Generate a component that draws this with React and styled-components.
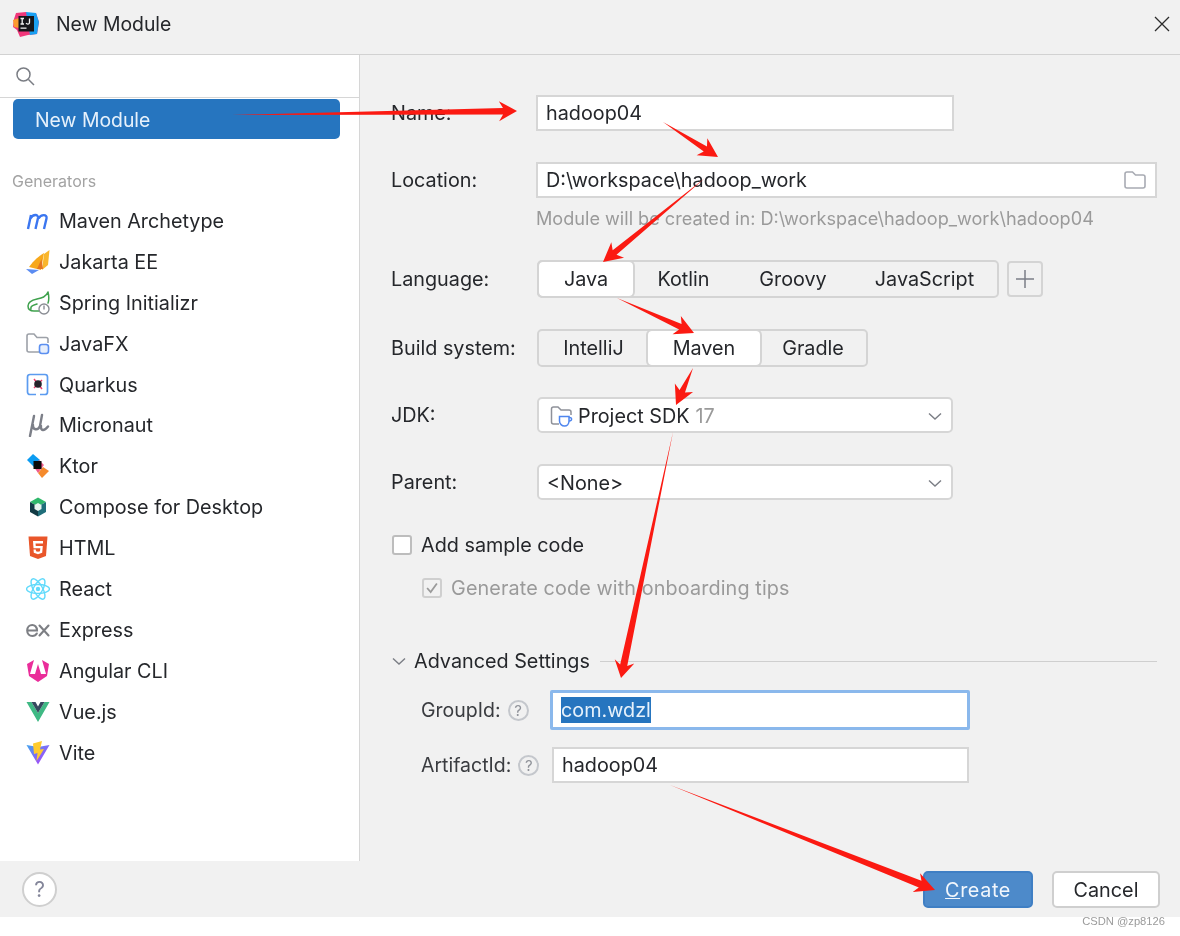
import React from 'react'
import styled, {createGlobalStyle} from 'styled-components'

const GlobalStyle = createGlobalStyle`
    html, body {
        margin: 0;
        padding: 0;
        background: #ffffff;
    }
    * {
        box-sizing: border-box;
    }
`

const MavenIcon = () => (
    <svg width="24" height="24" viewBox="0 0 24 24" fill="none" stroke="#3b76f0" strokeWidth="2.4">
        <path d="M2 20 L5 6 M4.5 9.5 C7 5 12.5 5 12 9 L9.5 20 M12.5 9.5 C15 5 21.5 5 20.5 9.5 L18 20"/>
    </svg>
)
const JakartaIcon = () => (
    <svg width="24" height="24" viewBox="0 0 24 24">
        <path d="M3 17 C8 10 13 6 18 3 L15 20 Z" fill="#f7a81b"/>
        <path d="M16 20 L18 4 L23.5 0 L22 15 Z" fill="#f9b62c"/>
        <path d="M11 19 L15.5 9 L17 19 Z" fill="#e5751f"/>
        <path d="M0 19 L13 20 L6 24 Z" fill="#5b8cf2"/>
    </svg>
)
const SpringIcon = () => (
    <svg width="24" height="24" viewBox="0 0 24 24" fill="none">
        <path d="M22 1 C20 6 16 7 11 8 C6 9 2 11 2 15 C2 19 5 20 8 20 H13 M5 18 C4 15 8 14 11 13 M22 1 C23 5 23 9 22 12" stroke="#3fa14d" strokeWidth="1.5" strokeLinecap="round"/>
        <circle cx="18" cy="18" r="5" fill="#fff" stroke="#8a8d94" strokeWidth="1.4"/>
        <path d="M18 14.5 V18.5" stroke="#8a8d94" strokeWidth="1.4"/>
    </svg>
)
const JavaFxIcon = () => (
    <svg width="24" height="24" viewBox="0 0 24 24" fill="none">
        <path d="M13 20 H3 C2 20 1 19 1 18 V4 C1 3 2 2 3 2 H8 L11 5.5 H20 C21 5.5 22 6.5 22 7.5 V11" stroke="#9da1a8" strokeWidth="1.6"/>
        <rect x="13.5" y="12.5" width="9" height="9" rx="2.4" fill="#e6eefc" stroke="#5b8ff0" strokeWidth="1.6"/>
    </svg>
)
const QuarkusIcon = () => (
    <svg width="24" height="24" viewBox="0 0 24 24" fill="none">
        <path d="M10 21.5 H4 C2.5 21.5 1.5 20.5 1.5 19 V4 C1.5 2.5 2.5 1.5 4 1.5 H19 C20.5 1.5 21.5 2.5 21.5 4 V19 C21.5 20.5 20.5 21.5 19 21.5 H14" stroke="#5b9bf0" strokeWidth="1.7"/>
        <path d="M8 6 L16 16 M16 7 L8 15" stroke="#ec3f6e" strokeWidth="1.5"/>
        <circle cx="12" cy="11" r="3.8" fill="#24242a"/>
    </svg>
)
const MicronautIcon = () => (
    <svg width="24" height="24" viewBox="0 0 24 24" fill="none" stroke="#7c7f88" strokeWidth="2.4" strokeLinecap="round">
        <path d="M8 3 L4 23 M7 12 C6.5 17 12 18 14 13 L16 2 M15 13 C14.5 18 18 18.5 22 13.5"/>
    </svg>
)
const KtorIcon = () => (
    <svg width="24" height="24" viewBox="0 0 24 24">
        <path d="M1 6 L7 0 L14 6 L8 13 Z" fill="#0c9cf2"/>
        <path d="M12 19 L17 13 L23 17 L16 24 Z" fill="#f58a2c"/>
        <path d="M8 13 L13 6 L18 11 L12 19 Z" fill="#ef5a8c"/>
        <rect x="7.5" y="7" width="8" height="8" fill="#0a0a0a"/>
    </svg>
)
const ComposeIcon = () => (
    <svg width="24" height="24" viewBox="0 0 24 24">
        <path d="M12 2.5 L20 7 L12 11.5 L4 7 Z" fill="#2fb86b"/>
        <path d="M4 7 L12 11.5 V21.5 L4 17 Z" fill="#123a44"/>
        <path d="M20 7 L12 11.5 V21.5 L20 17 Z" fill="#1f6e7a"/>
        <path d="M12 8 L15.5 10 V14 L12 16 L8.5 14 V10 Z" fill="#e8f4ee"/>
    </svg>
)
const HtmlIcon = () => (
    <svg width="24" height="24" viewBox="0 0 24 24">
        <path d="M2.5 0.5 H21.5 L20 20 L12 23 L4 20 Z" fill="#e9562a"/>
        <path d="M7 5 H17 V7.4 H9.5 L9.8 10 H16.8 L16.2 16.8 L12 18.2 L7.8 16.8 L7.5 13.6 H9.8 L10 15.2 L12 15.8 L14 15.2 L14.3 12.3 H7.5 Z" fill="#fff"/>
    </svg>
)
const ReactIcon = () => (
    <svg width="24" height="24" viewBox="0 0 24 24" fill="none" stroke="#61dafb" strokeWidth="1.4">
        <ellipse cx="12" cy="12" rx="11.5" ry="4.5"/>
        <ellipse cx="12" cy="12" rx="11.5" ry="4.5" transform="rotate(60 12 12)"/>
        <ellipse cx="12" cy="12" rx="11.5" ry="4.5" transform="rotate(120 12 12)"/>
        <circle cx="12" cy="12" r="2.2" fill="#61dafb" stroke="none"/>
    </svg>
)
const ExpressIcon = () => (
    <svg width="24" height="24" viewBox="0 0 24 24" fill="none" stroke="#7d7f84" strokeWidth="2.1" strokeLinecap="round">
        <path d="M1.5 12.5 H11 C11 8.5 8.5 7 6.3 7 C3.5 7 1.2 9 1.2 12.5 C1.2 16 3.5 18 6.3 18 C8.4 18 10 17 10.8 15.5"/>
        <path d="M13.5 7.5 L22.5 17.5 M22.5 7.5 L13.5 17.5"/>
    </svg>
)
const AngularIcon = () => (
    <svg width="24" height="24" viewBox="0 0 24 24">
        <path d="M8 1 L1 5 L3 17 L12 23 L21 17 L23 5 L16 1 L20 15 H15 L12 5 L9 15 H4 Z" fill="#ea2d9a"/>
        <path d="M12 8.5 L14 13.5 H10 Z" fill="#ea2d9a"/>
        <path d="M8 17 H16 L15.5 18.5 H8.5 Z" fill="#ea2d9a"/>
    </svg>
)
const VueIcon = () => (
    <svg width="24" height="24" viewBox="0 0 24 24">
        <path d="M0.5 2 H5.5 L12 13 L18.5 2 H23.5 L12 22 Z" fill="#3fb984"/>
        <path d="M5.5 2 H9.5 L12 6.5 L14.5 2 H18.5 L12 13 Z" fill="#35495e"/>
    </svg>
)
const ViteIcon = () => (
    <svg width="24" height="24" viewBox="0 0 24 24">
        <defs>
            <linearGradient id="viteBody" x1="0" y1="0" x2="1" y2="1">
                <stop offset="0" stopColor="#41a5ee"/>
                <stop offset="1" stopColor="#bd34fe"/>
            </linearGradient>
        </defs>
        <path d="M0.5 4 L12 6 L23.5 4 L12 23.5 Z" fill="url(#viteBody)"/>
        <path d="M16 0 L7 2.5 L8 13 L11.5 12 L10.5 20 L18 8 L14 8.5 Z" fill="#ffcb2e"/>
    </svg>
)

const generators = [
    {name: 'Maven Archetype', icon: <MavenIcon/>},
    {name: 'Jakarta EE', icon: <JakartaIcon/>},
    {name: 'Spring Initializr', icon: <SpringIcon/>},
    {name: 'JavaFX', icon: <JavaFxIcon/>},
    {name: 'Quarkus', icon: <QuarkusIcon/>},
    {name: 'Micronaut', icon: <MicronautIcon/>},
    {name: 'Ktor', icon: <KtorIcon/>},
    {name: 'Compose for Desktop', icon: <ComposeIcon/>},
    {name: 'HTML', icon: <HtmlIcon/>},
    {name: 'React', icon: <ReactIcon/>},
    {name: 'Express', icon: <ExpressIcon/>},
    {name: 'Angular CLI', icon: <AngularIcon/>},
    {name: 'Vue.js', icon: <VueIcon/>},
    {name: 'Vite', icon: <ViteIcon/>},
]

const languages = [
    {name: 'Java', width: 94, active: true},
    {name: 'Kotlin', width: 101},
    {name: 'Groovy', width: 118},
    {name: 'JavaScript', width: 145},
]
const buildSystems = [
    {name: 'IntelliJ', width: 109},
    {name: 'Maven', width: 112, active: true},
    {name: 'Gradle', width: 106},
]

const Chevron = () => (
    <svg width="16" height="16" viewBox="0 0 16 16" fill="none" stroke="#7b7e85" strokeWidth="1.4">
        <path d="M2 5.5 L8 11 L14 5.5"/>
    </svg>
)

const HelpDot = () => (
    <HelpMark>?</HelpMark>
)

// red annotation arrows pasted over the dialog: tapered tail, flat barbed head
const makeArrow = ([x1, y1, x2, y2, len = 19, half = 10, shaft = 3]) => {
    const d = Math.hypot(x2 - x1, y2 - y1)
    const ux = (x2 - x1) / d
    const uy = (y2 - y1) / d
    const at = (back, side) => `${x2 - ux * back - uy * side},${y2 - uy * back + ux * side}`
    return [`${x1},${y1}`, at(len - 4, -shaft), at(len, -half), `${x2},${y2}`, at(len, half), at(len - 4, shaft)].join(' ')
}

const arrows = [
    [232, 115, 517, 111, 18, 10, 3.2],
    [663, 122, 718, 157],
    [705, 178, 603, 262],
    [617, 298, 694, 333],
    [693, 368, 676, 405],
    [673, 432, 621, 678, 17, 10, 3.6],
    [670, 785, 935, 890, 20, 10, 3.6],
]

const App = () => {
    const renderSegments = (arr) => {
        return arr.map((s) => (
            <Segment key={s.name} $width={s.width} $active={s.active}>{s.name}</Segment>
        ))
    }

    return (
        <Page>
            <GlobalStyle/>
            <TitleBar>
                <LogoBox>
                    <svg width="28" height="28" viewBox="0 0 28 28">
                        <path d="M4 3 L14 2 L18 5 L24 3 L27 12 L25 24 L16 25 L8 27 L5 20 L1 17 L2 9 Z" fill="#f0377a"/>
                        <path d="M14 2 L24 3 L27 12 L25 24 L18 25 Z" fill="#1aa0f2"/>
                        <path d="M1 10 L7 8 L7 18 L2 17 Z" fill="#fb9a2e"/>
                        <rect x="6.5" y="6" width="15.5" height="15.5" fill="#16161a"/>
                        <rect x="8.5" y="17.5" width="6" height="1.3" fill="#e8e8e8"/>
                        <path d="M8.5 8.5 H12 M10.2 8.5 V14 M8.5 14 H12 M17.5 8.5 V12.5 C17.5 14.5 15 14.5 14 13.2" stroke="#f2f2f2" strokeWidth="1.3" fill="none"/>
                    </svg>
                </LogoBox>
                <Title>New Module</Title>
                <CloseIcon width="18" height="18" viewBox="0 0 18 18" stroke="#2b2b2b" strokeWidth="1.3">
                    <path d="M2 2 L16 16 M16 2 L2 16"/>
                </CloseIcon>
            </TitleBar>

            <Content>
                <Sidebar>
                    <SearchRow>
                        <svg width="22" height="22" viewBox="0 0 22 22" fill="none" stroke="#7a7d84" strokeWidth="1.5">
                            <circle cx="9.5" cy="9.5" r="6.5"/>
                            <path d="M14.5 14.5 L20 20"/>
                        </svg>
                    </SearchRow>
                    <SelectedItem>New Module</SelectedItem>
                    <GroupTitle>Generators</GroupTitle>
                    <GeneratorList>
                        {generators.map((g) => (
                            <GeneratorRow key={g.name}>
                                <IconBox>{g.icon}</IconBox>
                                {g.name}
                            </GeneratorRow>
                        ))}
                    </GeneratorList>
                </Sidebar>

                <Form>
                    <Row>
                        <Label>Name:</Label>
                        <Field $width={418}>hadoop04</Field>
                    </Row>
                    <Row $top={31}>
                        <Label>Location:</Label>
                        <Field $grow>
                            D:\workspace\hadoop_work
                            <FolderIcon width="24" height="24" viewBox="0 0 24 24" fill="none" stroke="#a8abb3" strokeWidth="1.6">
                                <path d="M4 20 C3 20 2 19 2 18 V6 C2 5 3 4 4 4 H9.5 L12.5 7 H20 C21 7 22 8 22 9 V18 C22 19 21 20 20 20 Z"/>
                            </FolderIcon>
                        </Field>
                    </Row>
                    <Hint>Module will be created in: D:\workspace\hadoop_work\hadoop04</Hint>
                    <Row $top={30}>
                        <Label>Language:</Label>
                        <SegmentGroup>{renderSegments(languages)}</SegmentGroup>
                        <AddButton>
                            <svg width="20" height="20" viewBox="0 0 20 20" stroke="#7b7e87" strokeWidth="1.5">
                                <path d="M10 1 V19 M1 10 H19"/>
                            </svg>
                        </AddButton>
                    </Row>
                    <Row $top={31}>
                        <Label>Build system:</Label>
                        <SegmentGroup>{renderSegments(buildSystems)}</SegmentGroup>
                    </Row>
                    <Row $top={30}>
                        <Label>JDK:</Label>
                        <Select>
                            <svg width="24" height="24" viewBox="0 0 24 24" fill="none">
                                <path d="M9 20 H3.5 C2.5 20 1.5 19 1.5 18 V5 C1.5 4 2.5 3 3.5 3 H8 L11 6 H19 C20 6 21 7 21 8 V11" stroke="#8e9199" strokeWidth="1.5"/>
                                <path d="M9.5 12.5 H19 V17 C19 20 17 22 14.5 22 C12 22 9.5 20 9.5 17 Z" fill="#fff" stroke="#4f86ee" strokeWidth="1.5"/>
                                <path d="M19 13.5 C22.5 13 22.5 17 19 17" stroke="#4f86ee" strokeWidth="1.4"/>
                            </svg>
                            Project SDK <Muted>17</Muted>
                            <SelectArrow><Chevron/></SelectArrow>
                        </Select>
                    </Row>
                    <Row $top={31}>
                        <Label>Parent:</Label>
                        <Select $plain>
                            &lt;None&gt;
                            <SelectArrow><Chevron/></SelectArrow>
                        </Select>
                    </Row>
                    <CheckRow $top={33}>
                        <CheckBox/>
                        Add sample code
                    </CheckRow>
                    <CheckRow $top={19} $indent={31} $disabled>
                        <CheckBox $disabled>
                            <svg width="18" height="18" viewBox="0 0 18 18" fill="none" stroke="#9a9a9a" strokeWidth="2">
                                <path d="M3.5 9 L7.5 13.5 L14.5 4"/>
                            </svg>
                        </CheckBox>
                        Generate code with onboarding tips
                    </CheckRow>
                    <AdvancedHeader>
                        <Chevron/>
                        <AdvancedTitle>Advanced Settings</AdvancedTitle>
                        <Divider/>
                    </AdvancedHeader>
                    <SubRow $top={17} $height={40}>
                        <SubLabel $width={129}>GroupId:<HelpDot/></SubLabel>
                        <FocusField><Selection>com.wdzl</Selection></FocusField>
                    </SubRow>
                    <SubRow $top={17} $height={36}>
                        <SubLabel $width={131}>ArtifactId:<HelpDot/></SubLabel>
                        <Field $width={417}>hadoop04</Field>
                    </SubRow>
                </Form>
            </Content>

            <Footer>
                <HelpButton>?</HelpButton>
                <FooterButtons>
                    <PrimaryButton><u>C</u>reate</PrimaryButton>
                    <CancelButton>Cancel</CancelButton>
                </FooterButtons>
            </Footer>

            <Watermark>CSDN @zp8126</Watermark>

            <ArrowLayer width="1180" height="936" viewBox="0 0 1180 936">
                {arrows.map((a) => <polygon key={a.join()} points={makeArrow(a)} fill="#fb1a12"/>)}
            </ArrowLayer>
        </Page>
    )
}
export default App


const Page = styled.div`
    position: relative;
    width: 1180px;
    height: 936px;
    overflow: hidden;
    display: flex;
    flex-direction: column;
    background: #ffffff;
    font-family: Inter, "Liberation Sans", sans-serif;
    font-size: 19.8px;
    color: #25272b;
    filter: blur(0.4px);
`

const TitleBar = styled.header`
    height: 55px;
    flex: none;
    display: flex;
    align-items: center;
    padding: 0 9px 7px 12px;
    background: #f1f1f1;
    border-bottom: 1px solid #d2d2d2;
`

const LogoBox = styled.div`
    width: 28px;
    height: 28px;
    margin-right: 16px;
`

const Title = styled.div`
    flex: 1;
    font-size: 19.4px;
`

const CloseIcon = styled.svg`
    fill: none;
`

const Content = styled.div`
    flex: none;
    height: 806px;
    display: flex;
`

const Sidebar = styled.aside`
    width: 360px;
    flex: none;
    background: #ffffff;
    border-right: 1px solid #d6d6d6;
`

const SearchRow = styled.div`
    height: 43px;
    display: flex;
    align-items: center;
    padding: 0 0 0 14px;
    border-bottom: 1px solid #d6d6d6;
`

const SelectedItem = styled.div`
    width: 327px;
    height: 40px;
    margin: 1px 0 0 13px;
    padding: 1px 0 0 22px;
    display: flex;
    align-items: center;
    border-radius: 5px;
    background: #2675bf;
    color: #e6f1fb;
    font-size: 19.4px;
`

const GroupTitle = styled.div`
    margin: 32px 0 0 12px;
    font-size: 16px;
    line-height: 20px;
    color: #a3a3a3;
`

const GeneratorList = styled.div`
    margin: 9.5px 0 0 26px;
`

const GeneratorRow = styled.div`
    height: 40.9px;
    display: flex;
    align-items: center;
`

const IconBox = styled.span`
    width: 24px;
    height: 24px;
    margin-right: 9px;
    display: flex;
`

const Form = styled.main`
    flex: 1;
    padding: 40px 23px 0 31px;
    background: #f1f1f1;
`

const Row = styled.div`
    display: flex;
    align-items: center;
    margin-top: ${(p) => p.$top || 0}px;
`

const Label = styled.label`
    width: 145px;
    flex: none;
`

const Field = styled.div`
    position: relative;
    height: 36px;
    display: flex;
    align-items: center;
    padding-left: 8px;
    background: #ffffff;
    border: 2px solid #d6d6d6;
    ${(p) => p.$grow ? 'flex: 1;' : `width: ${p.$width}px;`}
`

const FolderIcon = styled.svg`
    position: absolute;
    right: 8px;
    top: 4px;
`

const Hint = styled.div`
    margin: 8px 0 0 145px;
    font-size: 18.13px;
    line-height: 24px;
    color: #9a9a9a;
`

const SegmentGroup = styled.div`
    height: 38px;
    margin-left: 1px;
    display: flex;
    align-items: stretch;
    background: #f1f1f1;
    border: 2px solid #d4d4d4;
    border-radius: 5px;
`

const Segment = styled.div`
    width: ${(p) => p.$width}px;
    display: flex;
    align-items: center;
    justify-content: center;
    border-radius: 4px;
    ${(p) => p.$active && `
        background: #ffffff;
        outline: 2px solid #d4d4d4;
    `}
`

const AddButton = styled.div`
    width: 36px;
    height: 36px;
    margin-left: 8px;
    display: flex;
    align-items: center;
    justify-content: center;
    border: 2px solid #d4d4d4;
    border-radius: 4px;
    background: #f1f1f1;
`

const Select = styled.div`
    position: relative;
    width: 416px;
    height: 36px;
    margin-left: 1px;
    display: flex;
    align-items: center;
    gap: 4px;
    padding: 1px 0 0 ${(p) => p.$plain ? 8 : 11}px;
    background: #ffffff;
    border: 2px solid #d6d6d6;
    border-radius: 5px;
`

const Muted = styled.span`
    margin-left: 2px;
    color: #9a9a9a;
`

const SelectArrow = styled.span`
    position: absolute;
    right: 8px;
    top: 9px;
    display: flex;
`

const CheckRow = styled.div`
    height: 24px;
    display: flex;
    align-items: center;
    gap: 9px;
    margin-top: ${(p) => p.$top}px;
    margin-left: ${(p) => p.$indent || 1}px;
    color: ${(p) => p.$disabled ? '#9a9a9a' : 'inherit'};
    letter-spacing: ${(p) => p.$disabled ? '0.12px' : 'normal'};
`

const CheckBox = styled.span`
    width: 20px;
    height: 20px;
    display: flex;
    align-items: center;
    justify-content: center;
    background: ${(p) => p.$disabled ? '#f1f1f1' : '#ffffff'};
    border: 2px solid ${(p) => p.$disabled ? '#cfcfcf' : '#bdbdbd'};
    border-radius: 3px;
`

const AdvancedHeader = styled.div`
    height: 24px;
    margin-top: 49px;
    display: flex;
    align-items: center;
`

const AdvancedTitle = styled.div`
    margin: 0 10px 0 7px;
`

const Divider = styled.div`
    flex: 1;
    height: 1px;
    background: #cfcfcf;
`

const SubRow = styled.div`
    height: ${(p) => p.$height}px;
    margin-top: ${(p) => p.$top}px;
    padding-left: 30px;
    display: flex;
    align-items: center;
`

const SubLabel = styled.label`
    width: ${(p) => p.$width}px;
    flex: none;
    display: flex;
    align-items: center;
    gap: 7px;
    font-size: 19.5px;
    color: #3a3c40;
`

const HelpMark = styled.span`
    width: 21px;
    height: 21px;
    display: flex;
    align-items: center;
    justify-content: center;
    border: 2px solid #c4c7cc;
    border-radius: 50%;
    font-size: 15px;
    color: #8f9299;
`

const FocusField = styled.div`
    width: 420px;
    height: 40px;
    display: flex;
    align-items: center;
    padding-left: 8px;
    background: #ffffff;
    border: 3px solid #8ab8ec;
    border-radius: 2px;
`

const Selection = styled.span`
    padding: 1px 0;
    background: #2675bf;
    color: #e6f1fb;
`

const Footer = styled.footer`
    height: 56px;
    flex: none;
    display: flex;
    align-items: center;
    justify-content: space-between;
    padding: 1px 20px 0 22px;
    background: #f1f1f1;
`

const HelpButton = styled.div`
    width: 35px;
    height: 35px;
    display: flex;
    align-items: center;
    justify-content: center;
    background: #ffffff;
    border: 2px solid #cfcfcf;
    border-radius: 50%;
    font-size: 21px;
    color: #84869a;
`

const FooterButtons = styled.div`
    display: flex;
    gap: 19px;
`

const PrimaryButton = styled.div`
    width: 110px;
    height: 37px;
    padding-top: 1px;
    display: flex;
    align-items: center;
    justify-content: center;
    background: #4d8aca;
    border: 2px solid #3f7fc4;
    border-radius: 5px;
    color: #f1f6fc;
    letter-spacing: 0.6px;
`

const CancelButton = styled.div`
    width: 108px;
    height: 37px;
    padding-top: 1px;
    display: flex;
    align-items: center;
    justify-content: center;
    background: #ffffff;
    border: 2px solid #cfcfcf;
    border-radius: 5px;
`

const Watermark = styled.div`
    height: 19px;
    padding-right: 15px;
    text-align: right;
    font-family: "Liberation Sans", Arial, sans-serif;
    font-size: 11.2px;
    line-height: 9px;
    color: #9b9b9b;
`

const ArrowLayer = styled.svg`
    position: absolute;
    left: 0;
    top: 0;
    pointer-events: none;
`
